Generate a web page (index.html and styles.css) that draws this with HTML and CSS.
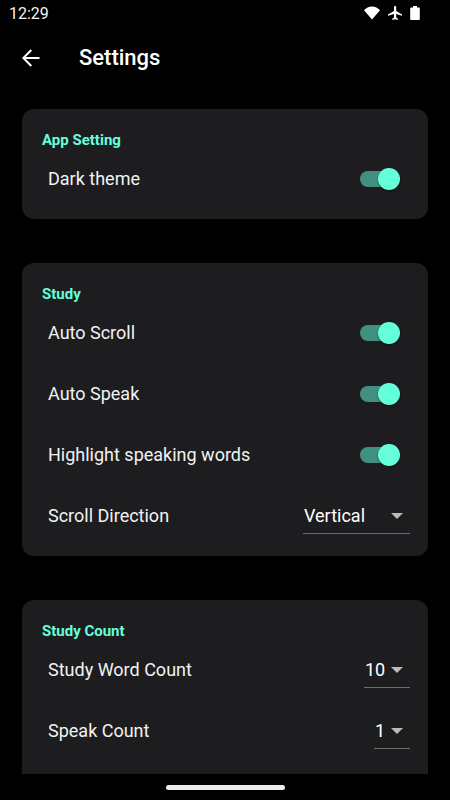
FILE: index.html
```html
<!DOCTYPE html>
<html lang="en">
<head>
  <meta charset="UTF-8" />
  <meta name="viewport" content="width=device-width, initial-scale=1.0" />
  <title>Settings</title>
  <link rel="stylesheet" href="styles.css">
</head>
<body>
  <!-- Status bar -->
  <div class="status-bar">
    <span class="clock">12:29</span>
    <div class="status-icons">
      <svg width="16" height="14" viewBox="0 0 16 14"><path d="M8 13.400 0 4.200C2 1.800 4.900.4 8 .4s6 1.400 8 3.800z"/></svg>
      <svg width="14" height="14" viewBox="0 0 14 14"><path d="M14 9.800V8.400L8.200 4.900V1.100a1.100 1.100 0 0 0-2.200 0v3.800L0 8.400v1.400L6 8v3.600l-1.700 1.200V14l2.800-.8 2.800.8v-1.200L8.200 11.600V8z"/></svg>
      <svg width="10" height="14" viewBox="0 0 10 14"><path d="M9 1.400H7V0H3v1.400H1a.8.8 0 0 0-.8.8v11c0 .4.4.8.8.8h8c.4 0 .8-.4.8-.8v-11a.8.8 0 0 0-.8-.8z"/></svg>
    </div>
  </div>

  <!-- App bar -->
  <header class="app-bar">
    <button class="back" aria-label="Back">
      <svg width="18" height="18" viewBox="0 0 18 18"><path d="M17.500 9H1.500M9.300 1 1.300 9l8 8"/></svg>
    </button>
    <h1>Settings</h1>
  </header>

  <main class="content">
    <section class="card">
      <h2>App Setting</h2>
      <div class="row">
        <label for="dark-theme">Dark theme</label>
        <input class="switch" type="checkbox" id="dark-theme" checked>
      </div>
    </section>

    <section class="card">
      <h2>Study</h2>
      <div class="row">
        <label for="auto-scroll">Auto Scroll</label>
        <input class="switch" type="checkbox" id="auto-scroll" checked>
      </div>
      <div class="row">
        <label for="auto-speak">Auto Speak</label>
        <input class="switch" type="checkbox" id="auto-speak" checked>
      </div>
      <div class="row">
        <label for="highlight">Highlight speaking words</label>
        <input class="switch" type="checkbox" id="highlight" checked>
      </div>
      <div class="row">
        <label for="direction">Scroll Direction</label>
        <span class="dropdown dropdown-wide">
          <select id="direction"><option>Vertical</option></select>
          <svg width="12" height="6" viewBox="0 0 12 6"><path d="M0 0h12L6 6z"/></svg>
        </span>
      </div>
    </section>

    <section class="card card-last">
      <h2>Study Count</h2>
      <div class="row">
        <label for="word-count">Study Word Count</label>
        <span class="dropdown">
          <select id="word-count"><option>10</option></select>
          <svg width="12" height="6" viewBox="0 0 12 6"><path d="M0 0h12L6 6z"/></svg>
        </span>
      </div>
      <div class="row">
        <label for="speak-count">Speak Count</label>
        <span class="dropdown">
          <select id="speak-count"><option>1</option></select>
          <svg width="12" height="6" viewBox="0 0 12 6"><path d="M0 0h12L6 6z"/></svg>
        </span>
      </div>
    </section>
  </main>

  <!-- Gesture bar -->
  <div class="nav-bar"><div class="nav-handle"></div></div>
</body>
</html>
```
FILE: styles.css
```css
/* ===== Base ===== */
* { box-sizing: border-box; margin: 0; padding: 0; }
body { display: flex; flex-direction: column; height: 100vh; background: #000; color: #f2f2f2; font-family: Roboto, sans-serif; font-size: 18px; }

/* ===== Status bar ===== */
.status-bar { display: flex; align-items: center; justify-content: space-between; height: 28px; padding: 0 30px 0 9px; }
.clock { font-size: 16px; line-height: 20px; }
.status-icons { display: flex; align-items: center; gap: 8px; height: 26px; align-self: flex-start; fill: #fff; }
.status-icons svg { display: block; }

/* ===== App bar ===== */
.app-bar { display: flex; align-items: center; gap: 28px; height: 60px; padding: 0 11px; }
.back { display: flex; align-items: center; justify-content: center; width: 40px; height: 40px; border: none; background: none; cursor: pointer; }
.back svg { fill: none; stroke: #fff; stroke-width: 2; }
h1 { color: #fff; font-size: 22px; font-weight: 500; line-height: 28px; }

/* ===== Content ===== */
.content { display: flex; flex: 1; flex-direction: column; gap: 44px; min-height: 0; padding: 21px 22px 0; overflow: auto; scrollbar-width: none; }
.card { flex: none; padding: 23px 18px 10px 20px; background: #1d1d1f; border-radius: 12px; }
.card-last { flex: 1 0 auto; border-radius: 12px 12px 0 0; }
h2 { color: #64ffda; font-size: 15px; font-weight: 700; line-height: 16px; }
.row { display: flex; align-items: center; justify-content: space-between; height: 61px; padding-left: 6px; }

/* ===== Switch ===== */
.switch { position: relative; width: 40px; height: 22px; margin-right: 10px; appearance: none; cursor: pointer; }
.switch::before { content: ""; position: absolute; top: 3px; left: 0; width: 36px; height: 16px; border-radius: 8px; background: #429080; }
.switch::after { content: ""; position: absolute; top: 0; left: 0; width: 22px; height: 22px; border-radius: 50%; background: #64ffda; box-shadow: 0 1px 2px rgba(0,0,0,0.5); }
.switch:checked::after { left: 18px; }

/* ===== Dropdown ===== */
.dropdown { position: relative; display: flex; height: 36px; border-bottom: 1px solid #6c6c6d; }
.dropdown select { padding: 0 24px 0 1px; border: none; background: none; color: #fff; font: inherit; appearance: none; cursor: pointer; }
.dropdown-wide select { width: 107px; }
.dropdown svg { position: absolute; top: 15px; right: 7px; fill: #bbb; pointer-events: none; }
option { background: #1d1d1f; }

/* ===== Gesture bar ===== */
.nav-bar { display: flex; align-items: center; justify-content: center; height: 26px; }
.nav-handle { width: 119px; height: 5px; border-radius: 3px; background: #ececec; }
```
